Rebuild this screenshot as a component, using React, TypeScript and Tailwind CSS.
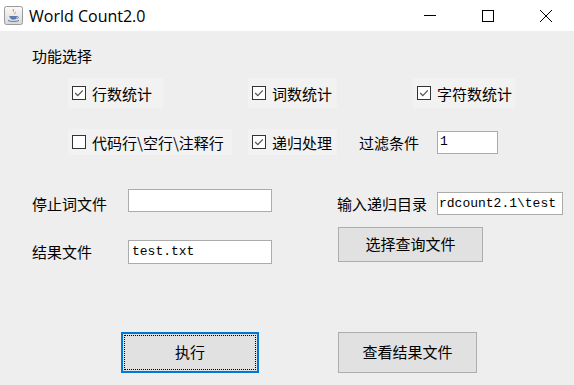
import React from "react";

const cjk = { fontFamily: '"Noto Sans CJK SC", "Noto Sans", sans-serif' };
const mono = { fontFamily: '"Liberation Mono", "DejaVu Sans Mono", monospace' };

function Box({ checked }: { checked: boolean }) {
  return (
    <svg width="14" height="14" viewBox="0 0 14 14" className="shrink-0">
      <rect x="0.5" y="0.5" width="13" height="13" fill="#ffffff" stroke="#333333" />
      {checked && (
        <path d="M3.2 7 L5.8 9.6 L10.8 4.4" fill="none" stroke="#555555" strokeWidth="1.3" />
      )}
    </svg>
  );
}

function Check({ label, checked, w, h = 30 }: { label: string; checked: boolean; w: number; h?: number }) {
  return (
    <div
      className="flex items-center gap-[6px] pl-[4px] bg-[#f2f2f2] text-[15px] text-black shrink-0"
      style={{ width: w, height: h, ...cjk }}
    >
      <Box checked={checked} />
      <span className="leading-none whitespace-nowrap">{label}</span>
    </div>
  );
}

function JavaIcon() {
  return (
    <svg width="19" height="19" viewBox="0 0 19 19">
      <defs>
        <linearGradient id="jg" x1="0" y1="0" x2="0" y2="1">
          <stop offset="0" stopColor="#fafafa" />
          <stop offset="1" stopColor="#d8d8d8" />
        </linearGradient>
      </defs>
      <rect x="0.5" y="0.5" width="18" height="18" rx="2" fill="url(#jg)" stroke="#9a9a9a" />
      <path d="M9.5 3 C11 5 8 6 9.5 8.5 C8 7 10 5.5 8.5 4 Z" fill="#e0702a" />
      <path d="M11 5 C11.5 6.5 10 7 10.5 8.5 C11.5 7.5 12 6.5 11 5 Z" fill="#e0702a" />
      <path d="M5 10 L13 10 L12.5 12.5 C12 14 7 14 6.5 12.5 Z" fill="#5a7ab0" />
      <path d="M13 10.5 C15 10.5 15 12.5 12.8 12.3" fill="none" stroke="#5a7ab0" strokeWidth="0.9" />
      <path d="M4 14.5 C6 15.8 13 15.8 15 14.5" fill="none" stroke="#5a7ab0" strokeWidth="1" />
    </svg>
  );
}

export default function App() {
  return (
    <div className="w-[574px] h-[385px] overflow-hidden bg-[#eeeeee] flex flex-col">
      {/* Title bar */}
      <div className="h-[31px] bg-white flex items-center shrink-0">
        <div className="ml-[4px] flex items-center">
          <JavaIcon />
        </div>
        <div
          className="ml-[6px] text-[16px] text-black leading-none"
          style={{ fontFamily: '"Open Sans", "Noto Sans", sans-serif' }}
        >
          World Count2.0
        </div>
        <div className="ml-auto flex h-full mr-[-1px]">
          <div className="w-[58px] h-full flex items-center justify-center">
            <svg width="12" height="12" viewBox="0 0 12 12">
              <line x1="0" y1="5.5" x2="12" y2="5.5" stroke="#000" strokeWidth="1" />
            </svg>
          </div>
          <div className="w-[58px] h-full flex items-center justify-center">
            <svg width="12" height="12" viewBox="0 0 12 12">
              <rect x="0.5" y="0.5" width="11" height="11" fill="none" stroke="#000" strokeWidth="1" />
            </svg>
          </div>
          <div className="w-[58px] h-full flex items-center justify-center">
            <svg width="12" height="12" viewBox="0 0 12 12">
              <line x1="0" y1="0" x2="12" y2="12" stroke="#000" strokeWidth="1" />
              <line x1="12" y1="0" x2="0" y2="12" stroke="#000" strokeWidth="1" />
            </svg>
          </div>
        </div>
      </div>

      {/* Content */}
      <div className="flex flex-col" style={cjk}>
        <div className="pt-[15px] pl-[32px] h-[35px] text-[15px] leading-[20px] text-black">功能选择</div>

        <div className="mt-[12px] h-[30px] flex items-center pl-[68px]">
          <Check label="行数统计" checked w={95} />
          <div className="ml-[85px]">
            <Check label="词数统计" checked w={89} />
          </div>
          <div className="ml-[76px]">
            <Check label="字符数统计" checked w={102} />
          </div>
        </div>

        <div className="mt-[20px] h-[28px] flex items-center pl-[68px]">
          <Check label="代码行\空行\注释行" checked={false} w={164} h={26} />
          <div className="ml-[16px]">
            <Check label="递归处理" checked w={89} h={26} />
          </div>
          <div className="ml-[22px] w-[78px] text-[15px] leading-none text-black">过滤条件</div>
          <div className="w-[61px] h-[23px] bg-white border border-[#ababab] flex items-center pl-[2px] text-[13px] text-black" style={mono}>
            1
          </div>
        </div>

        <div className="mt-[33px] h-[73px] flex pl-[32px]">
          <div className="w-[240px] flex flex-col">
            <div className="flex items-start">
              <div className="w-[96px] mt-[3px] text-[15px] leading-[23px] text-black">停止词文件</div>
              <div className="w-[144px] h-[23px] bg-white border border-[#ababab]" />
            </div>
            <div className="flex items-start mt-[25px]">
              <div className="w-[96px] text-[15px] leading-[23px] text-black">结果文件</div>
              <div
                className="w-[144px] h-[24px] bg-white border border-[#ababab] flex items-center pl-[3px] text-[13px] text-black"
                style={mono}
              >
                test.txt
              </div>
            </div>
          </div>
          <div className="ml-[65px] mt-[3px] flex flex-col">
            <div className="flex items-start">
              <div className="w-[100px] text-[15px] leading-[23px] text-black whitespace-nowrap">输入递归目录</div>
              <div
                className="w-[126px] h-[23px] bg-white border border-[#ababab] flex items-center pl-[1px] text-[13px] text-black overflow-hidden whitespace-nowrap"
                style={mono}
              >
                rdcount2.1\test
              </div>
            </div>
            <div className="mt-[12px] ml-[1px] w-[145px] h-[35px] bg-[#e1e1e1] border border-[#adadad] flex items-center justify-center text-[15px] text-black">
              选择查询文件
            </div>
          </div>
        </div>

        <div className="mt-[70px] h-[41px] flex pl-[121px]">
          <div className="w-[138px] h-[41px] border-2 border-[#0078d7] bg-[#e1e1e1] p-[1px]">
            <div className="w-full h-full border border-dotted border-black flex items-center justify-center text-[15px] text-black">
              执行
            </div>
          </div>
          <div className="ml-[79px] w-[139px] h-[41px] bg-[#e1e1e1] border border-[#adadad] flex items-center justify-center text-[15px] text-black">
            查看结果文件
          </div>
        </div>
      </div>
    </div>
  );
}
